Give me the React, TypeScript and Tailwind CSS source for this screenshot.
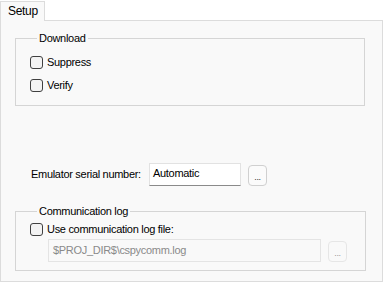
const font = "font-['Liberation_Sans',Arial,sans-serif]"

const Check = ({ label }: { label: string }) => (
  <label className="flex items-center h-[13px]">
    <span className="w-[13px] h-[13px] border border-[#404040] rounded-[3px] bg-[#f3f3f3]" />
    <span className="ml-[4px] text-[11px] leading-[13px] text-black">{label}</span>
  </label>
)

const App = () => {
  return (
    <div className={`w-[383px] h-[282px] bg-white ${font} text-[11px] tracking-[-0.3px] text-black`}>
      <div className="flex h-[21px]">
        <div className="mt-[1px] w-[45px] h-[20px] border-l border-t border-r border-[#dcdcdc] bg-[#f9f9f9] pl-[7px] pt-[2px] leading-[14px] text-[12px]">
          Setup
        </div>
        <div className="flex-1 border-b border-[#dcdcdc]" />
      </div>
      <div className="w-[383px] h-[261px] border-l border-r border-b border-[#dcdcdc] bg-[#f9f9f9] flex flex-col">
        <fieldset className="ml-[14px] mt-[11px] w-[350px] h-[74px] border border-[#d5d5d5] pl-[14px] pt-[11px] flex flex-col gap-[10px]">
          <legend className="ml-[7px] px-[2px] leading-[13px] text-[11px]">Download</legend>
          <Check label="Suppress" />
          <Check label="Verify" />
        </fieldset>

        <div className="mt-[57px] flex items-center h-[23px] ml-[30px]">
          <span className="w-[118px] text-[11px]">Emulator serial number:</span>
          <div className="w-[92px] h-[23px] bg-white border border-[#e2e2e2] border-b-[#8a8a8a] pl-[3px] pt-[3px] leading-[13px]">
            Automatic
          </div>
          <button className="ml-[7px] w-[19px] h-[21px] mt-[2px] border border-[#d0d0d0] rounded-[4px] bg-[#fbfbfb] text-[9px] leading-[18px] text-[#333] pt-[2px]">
            ...
          </button>
        </div>

        <fieldset className="ml-[14px] mt-[19px] w-[351px] h-[66px] border border-[#d5d5d5] pl-[14px] pt-[5px] flex flex-col">
          <legend className="ml-[7px] px-[2px] leading-[13px] text-[11px]">Communication log</legend>
          <Check label="Use communication log file:" />
          <div className="flex items-start mt-[3px] ml-[18px]">
            <div className="w-[273px] h-[23px] border border-[#e4e4e4] bg-[#f9f9f9] pl-[4px] pt-[4px] leading-[13px] text-[#8a8a8a]">
              $PROJ_DIR$\cspycomm.log
            </div>
            <button className="ml-[7px] mt-[2px] w-[19px] h-[21px] border border-[#e6e6e6] rounded-[4px] bg-[#f9f9f9] text-[9px] leading-[18px] text-[#9a9a9a] pt-[2px]">
              ...
            </button>
          </div>
        </fieldset>
      </div>
    </div>
  )
}

export default App
